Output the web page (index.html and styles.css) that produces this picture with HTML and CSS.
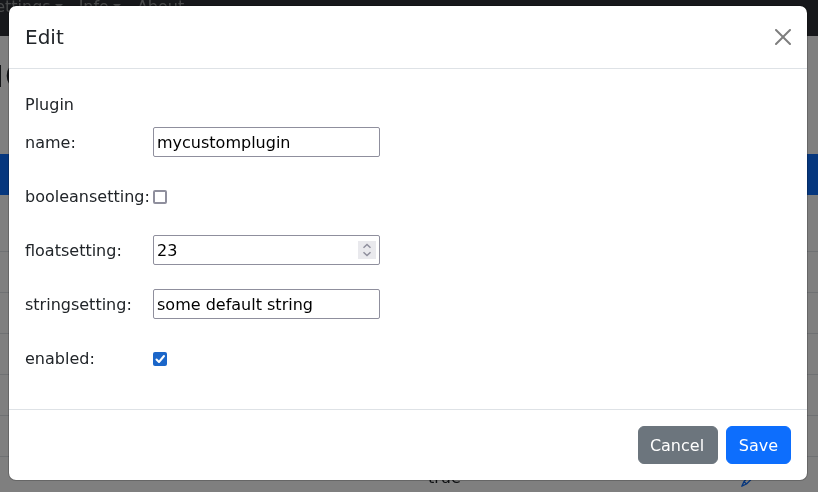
FILE: index.html
```html
<!DOCTYPE html>
<html lang="en">
<head>
<meta charset="utf-8">
<title>Edit</title>
<link rel="stylesheet" href="styles.css">
</head>
<body>
<div class="page">
  <nav class="navbar"><span class="drop">Settings</span><span class="drop">Info</span><span>About</span></nav>
  <h1 class="heading">Plugins</h1>
  <div class="table">
    <div class="thead"></div>
    <div class="row filter"></div>
    <div class="row"></div>
    <div class="row"></div>
    <div class="row"></div>
    <div class="row"></div>
    <div class="row"></div>
    <div class="row last"><span class="value">true</span>
      <svg class="pencil" width="16" height="16" viewBox="0 0 16 16"><path fill="none" stroke="currentColor" stroke-width="1.3" stroke-linejoin="round" d="M12.500 1 15 3.500 5.500 13 .800 15.200 3 10.500ZM3 10.500 5.500 13"/></svg>
    </div>
  </div>
</div>
<div class="backdrop"></div>
<div class="modal" role="dialog">
  <header class="modal-header">
    <h5 class="modal-title">Edit</h5>
    <svg class="close" width="16" height="16" viewBox="0 0 16 16"><path d="M.293.293a1 1 0 0 1 1.414 0L8 6.586 14.293.293a1 1 0 1 1 1.414 1.414L9.414 8l6.293 6.293a1 1 0 0 1-1.414 1.414L8 9.414l-6.293 6.293a1 1 0 0 1-1.414-1.414L6.586 8 .293 1.707a1 1 0 0 1 0-1.414z"/></svg>
  </header>
  <form class="modal-body">
    <div class="caption">Plugin</div>
    <label class="field first"><span class="label">name:</span><input class="input" type="text" value="mycustomplugin"></label>
    <label class="field"><span class="label">booleansetting:</span><span class="check"></span></label>
    <label class="field"><span class="label">floatsetting:</span><span class="input number"><span class="digits">23</span>
      <svg class="spinner" width="18" height="18" viewBox="0 0 18 18"><path fill="none" stroke="#8f8f9d" stroke-width="1.5" d="M5.500 6.800 9 3.500l3.500 3.300M5.500 11.200 9 14.500l3.500-3.300"/></svg></span></label>
    <label class="field"><span class="label">stringsetting:</span><input class="input" type="text" value="some default string"></label>
    <label class="field"><span class="label">enabled:</span><span class="check checked"><svg width="14" height="14" viewBox="0 0 14 14"><path fill="none" stroke="#fff" stroke-width="2" stroke-linecap="round" stroke-linejoin="round" d="M3.500 7.500 6 10l5-6"/></svg></span></label>
  </form>
  <footer class="modal-footer">
    <button class="btn cancel">Cancel</button>
    <button class="btn save">Save</button>
  </footer>
</div>
</body>
</html>
```

FILE: styles.css
```css
* { box-sizing: border-box; }
html, body { height: 100%; }
body {
  margin: 0;
  overflow: hidden;
  font: 16px/24px "DejaVu Sans", sans-serif;
  color: #212529;
  background: #fff;
}
.page { height: 492px; overflow: hidden; will-change: transform; }
.navbar {
  height: 36px;
  margin-left: -15px;
  display: flex;
  gap: 16px;
  background: #2f3136;
  color: #909294;
}
.navbar span { margin-top: -5px; }
.drop::after {
  content: "";
  display: inline-block;
  margin-left: 4px;
  vertical-align: 4px;
  border: 4px solid transparent;
  border-top-color: currentColor;
  border-bottom: 0;
}
.heading {
  margin: 13px 0 57px -56px;
  font-size: 40px;
  line-height: 48px;
  font-weight: 400;
}
.thead { height: 41px; background: #0d6efd; }
.row { height: 41px; border-bottom: 1px solid #dee2e6; }
.row.filter { height: 57px; }
.row.last { display: flex; justify-content: space-between; padding: 9px 61px 0 428px; }
.pencil { margin-top: 5px; color: #0d6efd; }
.backdrop { position: fixed; inset: 0; background: rgba(0, 0, 0, .5); }
.modal {
  position: fixed;
  top: 5px;
  left: 8px;
  width: 800px;
  height: 476px;
  display: flex;
  flex-direction: column;
  background: #fff;
  background-clip: padding-box;
  border: 1px solid rgba(0, 0, 0, .2);
  border-radius: 8px;
}
.modal-header {
  height: 63px;
  padding: 16px;
  display: flex;
  align-items: center;
  justify-content: space-between;
  border-bottom: 1px solid #dee2e6;
}
.modal-title { margin: 0; font-size: 20px; line-height: 30px; font-weight: 400; }
.close { opacity: .5; }
.modal-body { flex: 1; padding: 24px 16px 0; }
.caption { height: 24px; }
.field { display: flex; align-items: center; height: 30px; margin-top: 24px; }
.field.first { margin-top: 10px; }
.label { width: 128px; padding-top: 2px; white-space: nowrap; }
.input {
  width: 227px;
  height: 30px;
  padding: 0 3px;
  font: inherit;
  color: #000;
  background: #fff;
  border: 1px solid #8f8f9d;
  border-radius: 2px;
}
.number { display: flex; align-items: center; justify-content: space-between; }
.digits { padding-top: 2px; }
.spinner { background: #e9e9ed; }
.check { width: 14px; height: 14px; margin-top: 2px; border: 2px solid #8f8f9d; border-radius: 2px; }
.check.checked { border: 0; background: #1b66c9; }
.check svg { display: block; }
.modal-footer {
  height: 71px;
  padding: 16px;
  display: flex;
  justify-content: flex-end;
  gap: 8px;
  border-top: 1px solid #dee2e6;
}
.btn {
  height: 38px;
  padding: 7px 11px 5px;
  font: inherit;
  color: #fff;
  border: 1px solid;
  border-radius: 6px;
}
.cancel { width: 80px; padding-right: 12px; padding-left: 10px; background: #6c757d; border-color: #6c757d; }
.save { width: 65px; background: #0d6efd; border-color: #0d6efd; }
```
